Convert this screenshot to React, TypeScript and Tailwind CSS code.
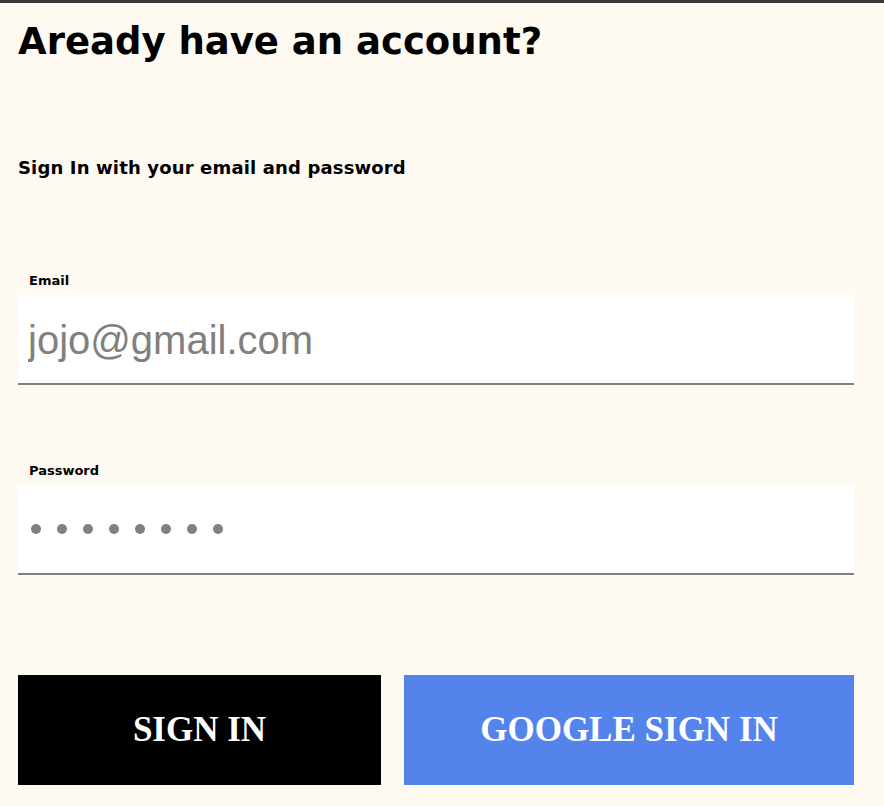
export default function App() {
  return (
    <div className="min-h-[806px] w-full bg-[#fefaf1] border-t-[3px] border-[#3b3b3b] font-['DejaVu_Sans','Noto_Sans',sans-serif] text-black">
      <div className="w-[836px] ml-[18px] pt-[15px]">
        <h2 className="text-[37px] leading-[48px] font-bold">Aready have an account?</h2>
        <p className="mt-[91px] text-[18px] leading-[22px] font-bold tracking-[0.15px]">Sign In with your email and password</p>

        <form className="mt-[94px]" onSubmit={(e) => e.preventDefault()}>
          <div>
            <label className="block ml-[11px] text-[13px] leading-[16px] font-bold">Email</label>
            <input
              type="email"
              placeholder="jojo@gmail.com"
              className="mt-[6px] block w-full h-[90px] bg-white border-b-2 border-[#808080] px-[10px] pt-[2px] font-['Liberation_Sans',Arial,sans-serif] text-[40px] text-[#808080] placeholder:text-[#808080] outline-none"
            />
          </div>

          <div className="mt-[78px]">
            <label className="block ml-[11px] text-[13px] leading-[16px] font-bold">Password</label>
            <div className="mt-[6px] flex items-center w-full h-[90px] bg-white border-b-2 border-[#808080] pl-[13px] gap-[16px]">
              {Array.from({ length: 8 }).map((_, i) => (
                <span key={i} className="block w-[10px] h-[10px] rounded-full bg-[#808080]" />
              ))}
            </div>
          </div>

          <div className="mt-[100px] flex gap-[23px]">
            <button
              type="submit"
              className="w-[363px] h-[110px] bg-black text-white font-['Liberation_Serif','Times_New_Roman',serif] font-bold text-[35px] uppercase"
            >
              Sign In
            </button>
            <button
              type="button"
              className="w-[450px] h-[110px] bg-[#5383eb] text-white font-['Liberation_Serif','Times_New_Roman',serif] font-bold text-[35px] uppercase"
            >
              Google Sign In
            </button>
          </div>
        </form>
      </div>
    </div>
  );
}
